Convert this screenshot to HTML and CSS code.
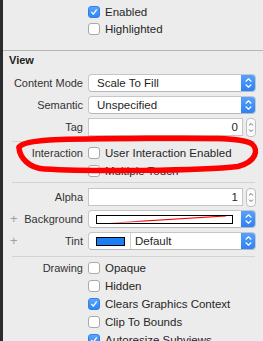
FILE: index.html
```html
<!DOCTYPE html>
<html>
<head>
<meta charset="utf-8">
<link rel="stylesheet" href="styles.css">
</head>
<body>
<div class="panel">
  <div class="top">
    <div class="row crow"><span class="label"></span><label class="check"><span class="box on"><svg viewBox="0 0 12 12"><path d="M3.2 6.4 L5.2 8.6 L8.9 3.4" /></svg></span>Enabled</label></div>
    <div class="row crow"><span class="label"></span><label class="check"><span class="box"></span>Highlighted</label></div>
  </div>
  <div class="sep-full"></div>
  <div class="header">View</div>

  <div class="row frow"><span class="label">Content Mode</span>
    <div class="popup"><span class="ptext">Scale To Fill</span><span class="cap"><svg viewBox="0 0 15 18"><path d="M5 7.2 L7.5 4.8 L10 7.2 M5 10.8 L7.5 13.2 L10 10.8"/></svg></span></div>
  </div>
  <div class="row frow"><span class="label">Semantic</span>
    <div class="popup"><span class="ptext">Unspecified</span><span class="cap"><svg viewBox="0 0 15 18"><path d="M5 7.2 L7.5 4.8 L10 7.2 M5 10.8 L7.5 13.2 L10 10.8"/></svg></span></div>
  </div>
  <div class="row frow"><span class="label">Tag</span>
    <div class="numfield"><span class="field">0</span><span class="stepper"><svg viewBox="0 0 10 19"><path d="M3 6.5 L5 4.5 L7 6.5 M3 12.5 L5 14.5 L7 12.5"/></svg></span></div>
  </div>
  <div class="sep"></div>

  <div class="group2">
    <div class="row crow"><span class="label">Interaction</span><label class="check"><span class="box"></span>User Interaction Enabled</label></div>
    <div class="row crow"><span class="label"></span><label class="check"><span class="box"></span>Multiple Touch</label></div>
  </div>
  <div class="sep sep2"></div>

  <div class="group3">
    <div class="row frow"><span class="label">Alpha</span>
      <div class="numfield"><span class="field">1</span><span class="stepper"><svg viewBox="0 0 10 19"><path d="M3 6.5 L5 4.5 L7 6.5 M3 12.5 L5 14.5 L7 12.5"/></svg></span></div>
    </div>
    <div class="row frow"><span class="label"><span class="plus">+</span>Background</span>
      <div class="popup"><span class="swatch-wide"><svg viewBox="0 0 136 7" preserveAspectRatio="none"><defs><linearGradient id="rl" x1="0" x2="1"><stop offset="0" stop-color="#ff0000" stop-opacity="0.2"/><stop offset="0.3" stop-color="#ff0000"/><stop offset="1" stop-color="#ff0000"/></linearGradient></defs><path d="M14 7 L130 0" stroke="url(#rl)" stroke-width="1.2" fill="none"/></svg></span><span class="cap"><svg viewBox="0 0 15 18"><path d="M5 7.2 L7.5 4.8 L10 7.2 M5 10.8 L7.5 13.2 L10 10.8"/></svg></span></div>
    </div>
    <div class="row frow"><span class="label"><span class="plus">+</span>Tint</span>
      <div class="popup"><span class="tintcell"><span class="swatch-blue"></span></span><span class="ptext tinttext">Default</span><span class="cap"><svg viewBox="0 0 15 18"><path d="M5 7.2 L7.5 4.8 L10 7.2 M5 10.8 L7.5 13.2 L10 10.8"/></svg></span></div>
    </div>
  </div>
  <div class="sep sep3"></div>

  <div class="group4">
    <div class="row crow"><span class="label">Drawing</span><label class="check"><span class="box"></span>Opaque</label></div>
    <div class="row crow"><span class="label"></span><label class="check"><span class="box"></span>Hidden</label></div>
    <div class="row crow"><span class="label"></span><label class="check"><span class="box on"><svg viewBox="0 0 12 12"><path d="M3.2 6.4 L5.2 8.6 L8.9 3.4" /></svg></span>Clears Graphics Context</label></div>
    <div class="row crow"><span class="label"></span><label class="check"><span class="box"></span>Clip To Bounds</label></div>
    <div class="row crow"><span class="label"></span><label class="check"><span class="box on"><svg viewBox="0 0 12 12"><path d="M3.2 6.4 L5.2 8.6 L8.9 3.4" /></svg></span>Autoresize Subviews</label></div>
  </div>
</div>
<svg class="scribble" viewBox="0 0 263 341" width="263" height="341">
  <path d="M19 147 C 26 139, 60 139, 130 138.5 C 200 138, 242 137, 252 144 C 259 150, 256 162, 238 166.5 C 200 171, 90 171.5, 44 169 C 29 168, 20 158, 19 148" />
</svg>
</body>
</html>
```
FILE: styles.css
```css
* { box-sizing: border-box; }
html, body { margin: 0; padding: 0; }
body {
  width: 263px;
  height: 341px;
  overflow: hidden;
  background: #ececec;
  font-family: "Liberation Sans", Arial, sans-serif;
  color: #262626;
  position: relative;
}
.panel {
  border-left: 3px solid #2b2b2d;
  height: 341px;
  display: flex;
  flex-direction: column;
}
.panel > * { flex-shrink: 0; }
.top { padding-top: 3px; }
.row {
  display: grid;
  grid-template-columns: 80px 1fr;
  column-gap: 5px;
  padding-right: 7px;
  align-items: center;
}
.crow { height: 17px; }
.group2 .crow, .group4 .crow { height: 18px; }
.frow { height: 22px; }
.label {
  font-size: 11px;
  text-align: right;
  color: #333;
  display: flex;
  justify-content: flex-end;
  align-items: center;
  position: relative;
}
.plus {
  position: absolute;
  left: 7px;
  top: -2px;
  color: #a0a0a0;
  font-size: 13px;
}
.check {
  display: flex;
  align-items: center;
  font-size: 11.5px;
  color: #262626;
  white-space: nowrap;
}
.box {
  width: 12px;
  height: 12px;
  border: 1px solid #a9a9a9;
  border-radius: 3px;
  background: #fff;
  margin-right: 5px;
  flex: none;
  display: flex;
}
.box.on {
  background: linear-gradient(#5aa6fb, #2f86f6);
  border-color: #2f7fe8;
}
.box svg { width: 10px; height: 10px; }
.box svg path { fill: none; stroke: #fff; stroke-width: 1.6; stroke-linecap: round; stroke-linejoin: round; }
.sep-full {
  height: 1px;
  background: #b6b6b6;
  margin-top: 13px;
}
.header {
  font-size: 11px;
  font-weight: bold;
  color: #222;
  height: 21px;
  padding-top: 2px;
  line-height: 15px;
  padding-left: 6px;
}
.popup {
  height: 18px;
  background: #fff;
  border: 1px solid #c6c6c6;
  border-bottom-color: #b8b8b8;
  border-radius: 4px;
  display: flex;
  align-items: center;
  overflow: hidden;
}
.ptext {
  flex: 1;
  font-size: 11.5px;
  padding-left: 8px;
  color: #1f1f1f;
}
.cap {
  width: 15px;
  align-self: stretch;
  margin: -1px -1px -1px 0;
  background: linear-gradient(#5aa3fb, #2b7ff6);
  border-radius: 0 4px 4px 0;
  display: flex;
}
.cap svg { width: 15px; height: 18px; }
.cap svg path { fill: none; stroke: #fff; stroke-width: 1.2; stroke-linecap: round; stroke-linejoin: round; }
.numfield {
  display: flex;
  align-items: center;
  gap: 3px;
}
.field {
  flex: 1;
  height: 18px;
  background: #fff;
  border: 1px solid #c6c6c6;
  font-size: 11.5px;
  text-align: right;
  padding-right: 4px;
  line-height: 16px;
}
.stepper {
  width: 10px;
  height: 19px;
  border: 1px solid #c0c0c0;
  border-radius: 4px;
  background: #fbfbfb;
  display: flex;
}
.stepper svg { width: 8px; height: 17px; }
.stepper svg path { fill: none; stroke: #444; stroke-width: 1; stroke-linecap: round; stroke-linejoin: round; }
.sep {
  height: 1px;
  background: #d3d3d3;
  margin: 3px 8px 2px 9px;
}
.sep2 { margin-top: 2px; margin-bottom: 3px; }
.sep3 { margin-top: 4px; margin-bottom: 2px; }
.swatch-wide {
  flex: 1;
  height: 9px;
  margin-left: 7px;
  margin-right: 8px;
  border: 1px solid #000;
  display: flex;
}
.swatch-wide svg { width: 100%; height: 100%; }
.tintcell {
  width: 42px;
  align-self: stretch;
  border-right: 1px solid #d0d0d0;
  display: flex;
  align-items: center;
  padding-left: 7px;
}
.swatch-blue {
  width: 29px;
  height: 9px;
  border: 1px solid #000;
  background: #1b7ef5;
}
.tinttext { padding-left: 4px; }
.scribble {
  position: absolute;
  left: 0;
  top: 0;
  pointer-events: none;
}
.scribble path {
  fill: none;
  stroke: #ff0000;
  stroke-width: 5.5;
  stroke-linecap: round;
  stroke-linejoin: round;
}
```
